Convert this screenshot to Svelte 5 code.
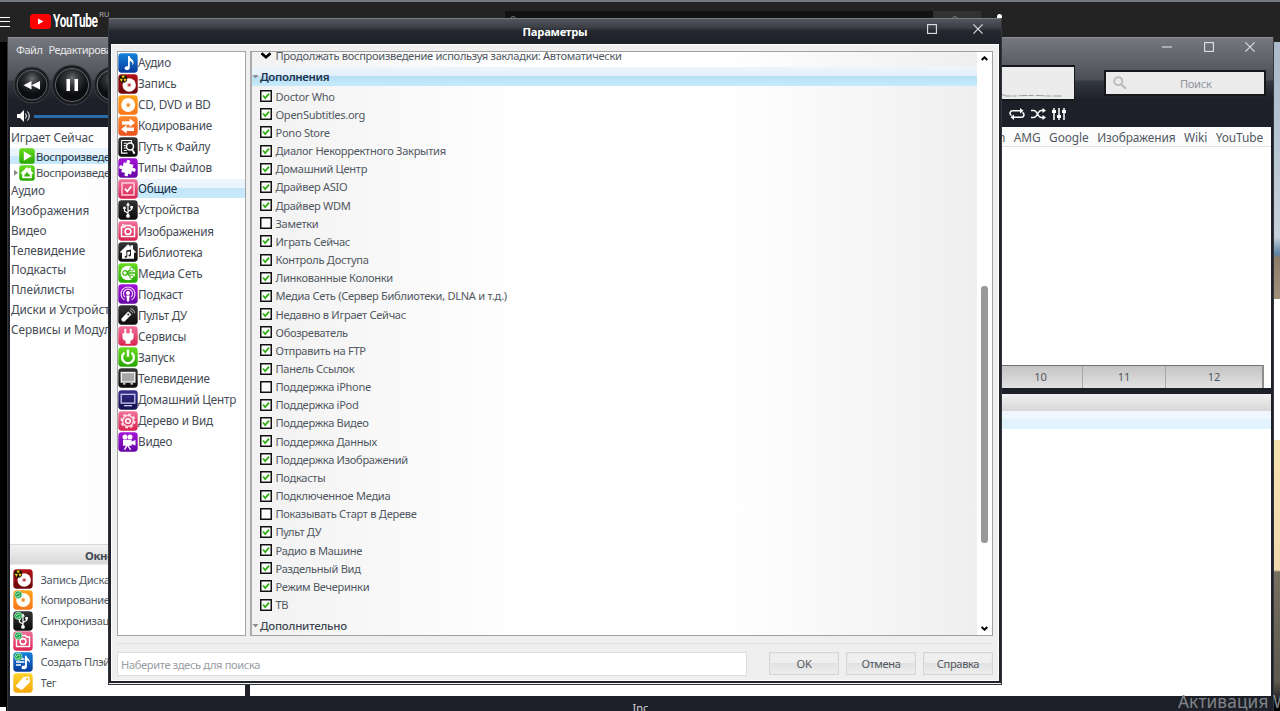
<script>
  const nav = [
    ['note', 'blue', 'Аудио'], ['burn', 'darkred', 'Запись'], ['disc', 'orange', 'CD, DVD и BD'],
    ['convert', 'flame', 'Кодирование'], ['path', 'black', 'Путь к Файлу'], ['puzzle', 'purple', 'Типы Файлов'],
    ['check', 'pink', 'Общие'], ['usb', 'black', 'Устройства'], ['camera', 'pink', 'Изображения'],
    ['house', 'black', 'Библиотека'], ['network', 'green', 'Медиа Сеть'], ['podcast', 'purple', 'Подкаст'],
    ['remote', 'black', 'Пульт ДУ'], ['plug', 'pink', 'Сервисы'], ['power', 'green', 'Запуск'],
    ['tv', 'black', 'Телевидение'], ['screen', 'navy', 'Домашний Центр'], ['gear', 'pink', 'Дерево и Вид'],
    ['video', 'purple', 'Видео']
  ];
  const off = ['Заметки', 'Поддержка iPhone', 'Показывать Старт в Дереве'];
  const options = ['Doctor Who', 'OpenSubtitles.org', 'Pono Store', 'Диалог Некорректного Закрытия', 'Домашний Центр',
    'Драйвер ASIO', 'Драйвер WDM', 'Заметки', 'Играть Сейчас', 'Контроль Доступа', 'Линкованные Колонки',
    'Медиа Сеть (Сервер Библиотеки, DLNA и т.д.)', 'Недавно в Играет Сейчас', 'Обозреватель', 'Отправить на FTP',
    'Панель Ссылок', 'Поддержка iPhone', 'Поддержка iPod', 'Поддержка Видео', 'Поддержка Данных',
    'Поддержка Изображений', 'Подкасты', 'Подключенное Медиа', 'Показывать Старт в Дереве', 'Пульт ДУ',
    'Радио в Машине', 'Раздельный Вид', 'Режим Вечеринки', 'ТВ'];
  const tree = ['Аудио', 'Изображения', 'Видео', 'Телевидение', 'Подкасты', 'Плейлисты', 'Диски и Устройства', 'Сервисы и Модули'];
  const actions = [
    ['burn', 'darkred', 'Запись Диска', false], ['disc', 'orange', 'Копирование Диска', true],
    ['usb', 'black', 'Синхронизация', true], ['camera', 'pink', 'Камера', true],
    ['playlist', 'blue', 'Создать Плэйлист', true], ['tag', 'yellow', 'Тег', false]
  ];
  const gradients = {
    blue: ['#1583dc', '#07399a'], darkred: ['#b51218', '#690507'], orange: ['#ffa51c', '#f8751a'],
    flame: ['#ff8a2e', '#ea511c'], black: ['#343434', '#0b0b0b'], purple: ['#a514d8', '#6406a5'],
    pink: ['#f0719a', '#d92350'], green: ['#68dc20', '#27a700'], navy: ['#39308c', '#14104d'], yellow: ['#ffd42b', '#f5a50c']
  };
  const links = ['Amazon', 'AMG', 'Google', 'Изображения', 'Wiki', 'YouTube'];
</script>

{#snippet icon(kind, color, badge)}
  <svg class="icon" viewBox="0 0 20 20">
    <rect x=".3" y=".3" width="19.4" height="19.4" rx="3.4" fill="url(#g-{color})" />
    <g fill="#fff" stroke="none">
      {#if kind === 'note'}
        <path d="M10 3h1.7c.2 2.6 3.9 3.4 3.9 6.5 0 1.2-.6 2.3-1.2 2.9.6-2.4-.5-3.7-2.6-4.3v6.4c0 1.6-1.3 2.6-2.8 2.6-1.4 0-2.4-.7-2.4-1.8 0-1.3 1.5-2.3 3.4-2z" />
      {:else if kind === 'burn'}
        <circle cx="11.2" cy="11" r="6.7" /><circle cx="11.2" cy="11" r="2.3" fill="#e9b4b4" /><circle cx="11.2" cy="11" r="1.1" fill="#b31a20" />
        <circle cx="5.2" cy="4.8" r="4" fill="#1a1400" />
        <path fill="#f4c81c" d="M5.2 4.8 3.4 1.6h3.6zM5.2 4.8H1.7l1.7 3.2zM5.2 4.8h3.5L7 8z" />
        <circle cx="5.2" cy="4.8" r=".9" fill="#1a1400" />
      {:else if kind === 'disc'}
        <circle cx="10.2" cy="10" r="7" /><circle cx="10.2" cy="10" r="2.5" fill="#ffd3a6" /><circle cx="10.2" cy="10" r="1.2" fill="#ef7d1a" />
      {:else if kind === 'convert'}
        <path d="M4 5.300h7.600V2.500l5.400 4.300-5.400 4.100V8.700H4zM16 11.400H8.600V9l-5.600 4.200 5.600 4.300v-2.600H16z" />
      {:else if kind === 'path'}
        <path d="M3.500 3.500h10v3M3.500 3.500v12.600h6M5.800 6.200h3M5.800 8.600h2M5.800 11h2M5.800 13.500h3" fill="none" stroke="#fff" stroke-width="1.1" />
        <circle cx="12" cy="9.600" r="3.500" fill="none" stroke="#fff" stroke-width="1.500" /><path d="m13.400 12.500 1.400-.8 2.600 4.600-1.800 1z" />
      {:else if kind === 'puzzle'}
        <g transform="rotate(14 10 10)"><path d="M4.500 5.500h3C6.200 3.400 7.300 2 8.800 2s2.600 1.400 1.300 3.500h4.400v3.700c2.100-1.300 3.500-.2 3.500 1.300s-1.400 2.600-3.500 1.300v3.700h-3.300c1.300 2.100.2 3-1.300 3s-2.600-.9-1.300-3H4.500v-3.300c-2.100 1.300-3.300.2-3.300-1.300s1.200-2.600 3.300-1.300z" /></g>
      {:else if kind === 'check'}
        <rect x="4" y="4" width="12" height="12" fill="none" stroke="#ffd6e1" stroke-width="1.400" /><path d="m6.800 9.700 2.500 2.700 4-5" fill="none" stroke="#fff" stroke-width="1.700" />
      {:else if kind === 'usb'}
        <path d="M10 5v10M10 13.200 6.500 11V8M10 11.500l3.600-2V7.500" fill="none" stroke="#fff" stroke-width="1.200" />
        <path d="m10 2.300 2 3.200H8z" /><circle cx="10" cy="15.900" r="1.900" /><circle cx="6.500" cy="8" r="1.400" /><path d="M12.300 6h2.600v2.500h-2.600z" />
      {:else if kind === 'camera'}
        <path d="M3.500 6h3l1-1.500h5l1 1.500h3v9.500h-13z" fill="none" stroke="#fff" stroke-width="1.500" /><circle cx="10" cy="10.500" r="2.900" fill="none" stroke="#fff" stroke-width="1.600" /><path d="M4 3.300h2.500v1.500H4z" />
      {:else if kind === 'house'}
        <path d="m10 2.200 2.700 2.500V3.200h2.300v3.700l3 3-1 1-1-.7v6.600H4v-6.600l-1 .7-1-1z" />
        <path d="M8.300 8.500 13 7.600v5.200c0 2.500-3 2-2.400.4.300-.8 1-.9 1.400-.9V9.500l-2.700.6v4c0 2.400-3 2.100-2.500.4.200-.7.900-.9 1.500-.8z" fill="#222" />
      {:else if kind === 'homeplay'}
        <path d="m10 2.500 2.700 2.500V3.500h2.300v3.700l3 3-1 1-1-.7v6H4v-6l-1 .7-1-1z" /><path d="M8.500 9.500h3v2h2v3H6.800v-3h1.700z" fill="#38b60b" />
      {:else if kind === 'play'}
        <path d="M6 4.200v11.600L16 10z" />
      {:else if kind === 'network'}
        <circle cx="10" cy="10" r="7.300" /><path d="M7.500 9.900 14 6.300M7.500 9.900l6.500 4M7.500 9.900H18" fill="none" stroke="#38b60b" stroke-width="1.500" /><circle cx="7" cy="9.900" r="2.200" stroke="#38b60b" stroke-width="1.200" /><circle cx="13.700" cy="6.200" r="1.800" stroke="#38b60b" /><circle cx="13.700" cy="13.800" r="1.800" stroke="#38b60b" />
      {:else if kind === 'podcast'}
        <g fill="none" stroke="#eedcff" stroke-width="1.100"><path d="M6.500 16A7 7 0 1 1 13.500 16" /><path d="M7 13.200A4.600 4.600 0 1 1 13 13.200" /></g><circle cx="10" cy="9" r="2" /><path d="M8.300 11.400h3.400l-.7 6H9z" />
      {:else if kind === 'remote'}
        <path d="m10.200 6.500 3.200 3.100-6.500 6.700c-1.900 1.400-4.400-.9-3.200-3z" /><circle cx="10.300" cy="9.600" r="1" fill="#222" />
        <path d="M12 5.800c1.300-.2 2.500.8 2.400 2.400M12.200 3.800c2.600-.2 4.500 1.700 4.200 4.400" fill="none" stroke="#ccc" stroke-width=".9" />
      {:else if kind === 'plug'}
        <path d="M6.300 2.700h1.900v4.600h3.600V2.700h1.900v4.600h1.800v4.300c0 1.800-1.400 3-3.100 3.200v3H7.600v-3c-1.700-.2-3.100-1.400-3.100-3.200V7.300h1.800z" />
      {:else if kind === 'power'}
        <path d="M6.500 5.600a5.900 5.900 0 1 0 7 0M10 2.800v7" fill="none" stroke="#fff" stroke-width="2.300" />
      {:else if kind === 'tv'}
        <rect x="3.300" y="4.500" width="13.500" height="9.500" fill="#a7a7a7" stroke="#f2f2f2" stroke-width="1.400" /><path d="M5 15.300h2.500v1.300H5zM12.500 15.300H15v1.300h-2.500z" />
      {:else if kind === 'screen'}
        <rect x="3.200" y="4.300" width="13.600" height="8.800" fill="none" stroke="#c6c9f4" stroke-width="1.300" /><path d="M6 15h8v1.300H6z" fill="#c6c9f4" />
      {:else if kind === 'gear'}
        <circle cx="10" cy="10" r="6.800" fill="none" stroke="#ffe3ea" stroke-width="1.500" stroke-dasharray="3 2.340" /><circle cx="10" cy="10" r="5.400" fill="none" stroke="#ffe3ea" stroke-width="1.500" /><circle cx="10" cy="10" r="2.300" fill="none" stroke="#fff" stroke-width="1.500" />
      {:else if kind === 'video'}
        <circle cx="7" cy="5" r="2.500" /><circle cx="12" cy="5" r="2.500" /><path d="M5 7.800h8.700v1.700L17.500 8v5.500l-3.800-1.500v1.700h-3l2.700 4h-1.700L9.500 14l-2.200 3.700H5.700l2.300-4H5z" />
      {:else if kind === 'playlist'}
        <path d="M3 6.200h8.500v1.600H3zM3 9.200h8.500v1.600H3zM3 12.200h5v1.600H3zM12 3.700h1.500c.3 2.600 4 3.200 3.400 7.500-.7-1.600-1.600-2.200-3-2.600v6.100c-.3 3.200-5.400 3.300-5.400 1 0-1.500 1.700-2.400 3.500-2z" />
      {:else if kind === 'tag'}
        <path d="M3.200 12.300 10.600 4l5.500-.6.900 5.500-7.500 7.600c-.6.600-1.100.6-1.700 0L3.200 13.700c-.4-.5-.4-.9 0-1.400z" /><circle cx="14.200" cy="6.100" r="1.100" fill="#f7b51a" />
      {/if}
      {#if badge}
        <circle cx="5.300" cy="4.800" r="3.700" fill="#1fa04d" stroke="#b8f1ca" stroke-width=".8" /><path d="M3.500 5a2 2 0 0 1 3.300-1.500M7 4.800a2 2 0 0 1-3.300 1.500" fill="none" stroke="#d9ffe5" stroke-width=".8" />
      {/if}
    </g>
  </svg>
{/snippet}

<svg class="defs" width="0" height="0">
  <defs>
    {#each Object.entries(gradients) as [id, [a, b]]}
      <linearGradient id="g-{id}" x2="0" y2="1"><stop stop-color={a} /><stop offset="1" stop-color={b} /></linearGradient>
    {/each}
    <radialGradient id="g-knob" cy=".3"><stop stop-color="#6a6c71" /><stop offset=".45" stop-color="#303135" /><stop offset="1" stop-color="#0c0d10" /></radialGradient>
  </defs>
</svg>

<div class="desktop">
  <header class="youtube">
    <div class="burger"></div>
    <svg class="ytmark" viewBox="0 0 21 15"><rect width="21" height="15" rx="3.500" fill="#f00" /><path d="M8 4.400v6.200l5.500-3.100z" fill="#fff" /></svg>
    <span class="ytname">YouTube</span><sup>RU</sup>
    <div class="ytsearch"><i></i></div><div class="ytbtn"><i></i></div><div class="ytmic"></div>
  </header>
  <div class="wallpaper"></div>
  <div class="corner"></div>

  <section class="player">
    <div class="chrome">
      <div class="controls">
        <div class="menu"><span>Файл</span><span>Редактировать</span></div>
        <div class="knobs">
          <svg width="38" height="40" viewBox="0 0 38 40"><circle cx="19" cy="20" r="18" fill="#1b1c20" stroke="#3f4146" /><circle cx="19" cy="20" r="15" fill="url(#g-knob)" stroke="#74767b" stroke-width=".8" /><path d="M18.500 16v8.500l-8-4.300zM27 16v8.500l-8.500-4.300z" fill="#fff" /></svg>
          <svg width="42" height="44" viewBox="0 0 42 44"><circle cx="21" cy="22" r="20" fill="#1b1c20" stroke="#3f4146" /><circle cx="21" cy="22" r="16.500" fill="url(#g-knob)" stroke="#777" stroke-width=".8" /><path d="M15.500 16h3.500v12h-3.500zM23.500 16h3.500v12h-3.500z" fill="#fff" /></svg>
          <svg width="38" height="40" viewBox="0 0 38 40"><circle cx="19" cy="20" r="18" fill="#1b1c20" stroke="#3f4146" /><circle cx="19" cy="20" r="15" fill="url(#g-knob)" stroke="#74767b" /></svg>
        </div>
        <div class="volume">
          <svg width="14" height="12" viewBox="0 0 14 12"><path d="M0 4h3l4-4v12L3 8H0z" fill="#fff" /><path d="M8.500 3.500q2 2.500 0 5M10.500 1.500q3.500 4.500 0 9" fill="none" stroke="#fff" /></svg>
          <div class="track"></div>
        </div>
      </div>
      <div class="tools">
        <div class="winbtns">
          <svg width="10" height="10" viewBox="0 0 10 10"><path d="M0 5h10" /></svg>
          <svg width="10" height="10" viewBox="0 0 10 10"><rect x=".6" y=".6" width="8.800" height="8.800" /></svg>
          <svg width="10" height="10" viewBox="0 0 10 10"><path d="m.4.400 9.200 9.200M9.600.400.400 9.600" /></svg>
        </div>
        <div class="boxes">
          <div class="display"><svg width="72" height="6" viewBox="0 0 72 6"><path d="M0 3.500l4 1.500h10l8-.5h14l10 .5h14" stroke="#9b9da5" stroke-width="1" stroke-dasharray="9 1 5 2" fill="none" /></svg></div>
          <div class="find"><svg width="14" height="14" viewBox="0 0 14 14"><circle cx="5.300" cy="5.200" r="4" fill="none" stroke="#bcbcbc" stroke-width="2" /><path d="m8.300 8.300 4.500 4.500" stroke="#bcbcbc" stroke-width="2.300" /></svg><span>Поиск</span></div>
        </div>
        <div class="modes">
          <svg width="16" height="12" viewBox="0 0 16 12"><path d="M2.500 7.500C0 6 1 2.700 3.500 2.700H12M13.500 4.500C16 6 15 9.300 12.500 9.300H4" /><path class="solid" d="M11 0l3.500 2.700L11 5.400zM5 6.600 1.500 9.300 5 12z" /></svg>
          <svg width="15" height="12" viewBox="0 0 15 12"><path d="M0 2.500h3c3 0 4 7 7 7h2M0 9.500h3c3 0 4-7 7-7h2" /><path class="solid" d="M11.500 0 15 2.500l-3.500 2.600zM11.500 6.900 15 9.500 11.500 12z" /></svg>
          <svg width="14" height="12" viewBox="0 0 14 12"><path d="M2 0v12M7 0v12M12 0v12" /><path class="solid" d="M0 2h4v3H0zM5 7h4v3H5zM10 2h4v3h-4z" /></svg>
        </div>
      </div>
    </div>
    <div class="work">
      <aside>
        <div class="tree">
          <div class="trow">Играет Сейчас</div>
          <div class="sub active"><b></b>{@render icon('play', 'green')}<span>Воспроизведение</span></div>
          <div class="sub"><b><i class="arrow"></i></b>{@render icon('homeplay', 'green')}<span>Воспроизведение</span></div>
          {#each tree as t}<div class="trow">{t}</div>{/each}
        </div>
        <div class="acthead">Окно Действий</div>
        <div class="actions">
          {#each actions as [k, c, t, b]}<div class="act">{@render icon(k, c, b)}<span>{t}</span></div>{/each}
        </div>
      </aside>
      <main>
        <div class="upper">
          <div class="links">{#each links as l}<span>{l}</span>{/each}</div>
          <div class="cols"><span>10</span><span>11</span><span>12</span></div>
        </div>
        <div class="lower"><div class="lhead"></div><div class="lsel"></div></div>
      </main>
    </div>
    <footer>Inc</footer>
  </section>

  <section class="dialog">
    <div class="title"><span>Параметры</span>
      <div class="dbtns">
        <svg width="10" height="10" viewBox="0 0 10 10"><rect x=".6" y=".6" width="8.800" height="8.800" /></svg>
        <svg width="10" height="10" viewBox="0 0 10 10"><path d="m.4.400 9.200 9.200M9.600.400.400 9.600" /></svg>
      </div>
    </div>
    <div class="body">
      <div class="panes">
        <nav>
          {#each nav as [k, c, t]}<div class={['nrow', k === 'check' && 'sel']}>{@render icon(k, c)}<span>{t}</span></div>{/each}
        </nav>
        <div class="settings">
          <div class="content">
            <div class="opt first"><svg width="12" height="8" viewBox="0 0 12 8"><path d="m1.500 1.300 4.500 4 4.500-4" fill="none" stroke="#000" stroke-width="2.600" /></svg><span>Продолжать воспроизведение используя закладки: Автоматически</span></div>
            <div class="group on"><i></i>Дополнения</div>
            <div class="opts">
              {#each options as o}
                <div class="opt">
                  <svg width="12" height="12" viewBox="0 0 12 12"><rect x=".75" y=".75" width="10.500" height="10.500" fill="#fff" stroke="#111" stroke-width="1.500" />{#if !off.includes(o)}<path d="m3 5.500 2.200 2.600L9 3.600" fill="none" stroke="#2fae12" stroke-width="1.700" />{/if}</svg>
                  <span>{o}</span>
                </div>
              {/each}
            </div>
            <div class="group"><i></i>Дополнительно</div>
          </div>
          <div class="scroll">
            <svg width="7" height="5" viewBox="0 0 7 5"><path d="M.7 4 3.500 1.300 6.300 4" /></svg>
            <div class="thumb"></div>
            <svg width="7" height="5" viewBox="0 0 7 5"><path d="M.7 1 3.500 3.700 6.300 1" /></svg>
          </div>
        </div>
      </div>
      <div class="bottom">
        <div class="query">Наберите здесь для поиска</div>
        <div class="buttons"><button>OK</button><button>Отмена</button><button>Справка</button></div>
      </div>
    </div>
  </section>
  <div class="watermark">Активация Windows</div>
</div>

<style>
  :global(body) { overflow: hidden; }
  * { box-sizing: border-box; }
  .desktop { position: relative; width: 1280px; height: 711px; overflow: hidden; background: #000; font-family: "Noto Sans", sans-serif; font-size: 11.1px; color: #515862; white-space: nowrap; }
  .defs { position: absolute; }
  .icon { flex: none; width: 20px; height: 20px; display: block; }
  .youtube { display: flex; height: 42px; background: #232323; border-top: 2px solid #73797e; position: relative; }
  .burger { width: 10px; height: 10px; margin-top: 15px; border-top: 1.500px solid #fff; border-bottom: 1px solid #fff; background: linear-gradient(#fff, #fff) 0 3px / 10px 1px no-repeat; }
  .ytmark { width: 21px; height: 15px; margin: 12px 0 0 20px; }
  .ytname { width: 44px; margin: 8px 0 0 2px; font: 700 18.500px/23px Roboto, sans-serif; letter-spacing: -.5px; color: #fff; transform: scaleX(.64); transform-origin: 0 0; }
  sup { font: 8px/10px Roboto, sans-serif; margin: 8px 0 0 2px; color: #aaa; }
  .ytsearch, .ytbtn { position: absolute; top: 9px; height: 30px; background: #121212; left: 505px; width: 428px; }
  .ytbtn { left: 933px; width: 48px; background: #323232; }
  .ytsearch i, .ytbtn i { display: block; width: 6px; height: 6px; margin: 5px 0 0 5px; border: 1px solid #777; border-radius: 50%; }
  .ytbtn i { margin-left: 19px; }
  .ytmic { position: absolute; left: 997px; top: 12px; width: 5px; height: 8px; border-radius: 3px; background: #fff; }
  .wallpaper { position: absolute; left: 1274px; top: 42px; width: 6px; height: 658px; background: linear-gradient(#a9bacb 0, #c5d0da 195px, #5c83a5 212px, #8d7d68 216px, #a28f79 257px, #fff 257px, #fff 398px, #f5e3ae 398px, #eed9ad 528px, #77705f 530px, #5e594e 640px, #222 658px); }
  .corner { position: absolute; left: 0; top: 707px; width: 6px; height: 4px; background: #fff; }

  .player { position: absolute; left: 7px; top: 37px; width: 1267px; height: 674px; background: #1d2028; display: flex; flex-direction: column; border-left: 1px solid #34373e; border-right: 1px solid #34373e; }
  .chrome { height: 90px; flex: none; display: flex; justify-content: space-between; border-top: 1px solid #8b8e93; background: linear-gradient(#75787e, #4b4e55 42px, #343840 43px, #1d2028 62px); }
  .controls { width: 240px; }
  .menu { display: flex; gap: 6px; padding: 4px 0 0 8px; height: 25px; line-height: 16px; color: #e6e7e9; font-size: 11px; letter-spacing: -.5px; }
  .knobs { display: flex; align-items: center; padding-left: 5px; height: 44px; gap: 0; }
  .volume { display: flex; align-items: center; gap: 3px; padding-left: 9px; margin-top: 3px; height: 12px; }
  .track { flex: 1; height: 3px; background: #286cab; }
  .tools { width: 271px; display: flex; flex-direction: column; }
  .winbtns { display: flex; gap: 31.500px; justify-content: flex-end; padding: 4px 18px 0 0; height: 27px; }
  .winbtns svg, .dbtns svg { fill: none; stroke: #e1e2e4; stroke-width: 1.100; }
  .boxes { display: flex; justify-content: space-between; height: 36px; padding-right: 7px; }
  .display { width: 73px; height: 36px; border: 2px solid #15171b; border-left: 0; border-right-width: 1px; background: #ececec; display: flex; align-items: flex-end; padding-bottom: 2px; }
  .find { width: 162px; height: 26px; margin-top: 5px; border: 2px solid #16181c; background: #ebebeb; display: flex; align-items: center; padding-left: 7px; color: #8f949b; letter-spacing: -.3px; }
  .find span { margin-left: 53px; }
  .modes { display: flex; gap: 6px; padding: 7px 0 0 7px; }
  .modes svg { fill: none; stroke: #fff; stroke-width: 1.500; }
  .modes .solid { fill: #fff; stroke: none; }
  .work { height: 569px; flex: none; display: flex; gap: 5px; padding: 0 2px; }
  aside { width: 235px; display: flex; flex-direction: column; background: #fff; }
  .tree { height: 417px; padding-top: 1px; background: linear-gradient(90deg, #fff 30%, #f0f0f0); font-size: 11.800px; letter-spacing: -.05px; color: #444b55; }
  .trow { height: 19.850px; line-height: 19px; padding-left: 1px; }
  .sub { display: flex; align-items: center; height: 16.600px; padding-left: 4px; font-size: 11.300px; letter-spacing: -.35px; }
  .sub .icon { width: 16px; height: 16px; margin-right: 1px; }
  .sub b { width: 5px; flex: none; }
  .arrow { display: block; width: 4px; height: 6px; background: #888; clip-path: polygon(0 0, 100% 50%, 0 100%); }
  .active { background: linear-gradient(#eaf4fd 50%, #c7e9fb 50%); color: #263445; }
  .acthead { height: 21px; flex: none; line-height: 22px; padding-left: 75px; font-weight: 700; font-size: 11.300px; letter-spacing: -.4px; background: linear-gradient(#f2f2f2, #d9d9d9 90%, #eee); border-top: 1px solid #d8d8d8; color: #414852; }
  .actions { padding-top: 4px; }
  .act { display: flex; gap: 7.500px; align-items: center; height: 20.650px; padding-left: 3px; letter-spacing: -.3px; }
  .act span { width: 70px; overflow: hidden; }
  main { flex: 1; display: flex; flex-direction: column; gap: 6px; }
  .upper { height: 261px; background: #fff; display: flex; flex-direction: column; justify-content: space-between; }
  .links { display: flex; justify-content: flex-end; gap: 8.500px; height: 20px; line-height: 21px; padding-right: 8px; border-bottom: 1px solid #e2e2e2; background: #fcfcfc; font-size: 11.900px; letter-spacing: -.1px; }
  .cols { align-self: flex-end; display: grid; grid-template-columns: 83px 83px 97px; height: 23px; margin-right: 7px; border-top: 1px solid #717375; border-right: 2px solid #8e8e8e; background: linear-gradient(#c4c4c4, #e2e2e2); text-align: center; line-height: 22px; }
  .cols span + span { border-left: 1px solid #a7a7a7; }
  .lower { flex: 1; background: #fff; }
  .lhead { height: 17px; background: linear-gradient(#f1f1f1, #d7d7d7); }
  .lsel { height: 18px; background: linear-gradient(#f0f6fd 45%, #e1f3fc 45%); }
  footer { padding: 4px 0 0 0; color: #d3d5d8; text-align: center; line-height: 15px; font-size: 11px; }

  .dialog { position: absolute; left: 108px; top: 18px; width: 894px; height: 667px; background: #202329; border: solid #33363b; border-width: 0 1px 1px; padding: 0 2px 2px; box-shadow: inset 0 -1px #f4f4f4; }
  .title { height: 26px; margin: 0 -2px; border-top: 1px solid #777a80; background: linear-gradient(#54575d, #393c43 9px, #24272e 12px, #1d2028); display: flex; align-items: center; justify-content: center; color: #fff; font-size: 11.200px; font-weight: 700; letter-spacing: -.25px; position: relative; }
  .title span { line-height: 24px; margin-top: 1px; }
  .dbtns { position: absolute; right: 18px; top: 5px; display: flex; gap: 36px; }
  .body { height: 637px; background: #efefef; border: 1px solid #fff; padding: 6px 5px 0; }
  .panes { display: flex; gap: 5px; height: 585px; }
  nav { width: 129px; border: 1px solid #a5a5a5; background: #fff; color: #444b55; font-size: 11.700px; letter-spacing: -.2px; }
  .nrow { height: 21.070px; display: flex; align-items: center; }
  .nrow span { line-height: 19px; }
  .sel { background: linear-gradient(transparent 1px, #eef5fd 1px, #e8f3fd 10px, #c1e5f8 10px, #c8ebfb 20px, transparent 20px); color: #152c44; }
  .settings { width: 743px; border: 1px solid #a0a0a0; border-left: 2px solid #aaa; margin-left: -1px; padding-right: 0; display: flex; overflow: hidden; flex: 1; }
  .content { flex: 1; background: linear-gradient(90deg, #f2f2f2, #fff 38%, #fff 65%, #efefef); }
  .opt { display: flex; gap: 3.500px; align-items: center; height: 18.170px; padding-left: 8px; line-height: 18px; letter-spacing: -.3px; }
  .opt svg { flex: none; margin-top: -1px; }
  .first { height: 14px; align-items: flex-end; line-height: 18px; }
  .first span { margin-bottom: 1px; }
  .first svg { margin-bottom: 6px; }
  .group { display: flex; align-items: center; height: 20px; font-size: 11.500px; font-weight: 500; letter-spacing: -.25px; color: #3e4650; }
  .group i { width: 7px; height: 4px; background: #8b8e94; clip-path: polygon(0 0, 100% 0, 50% 100%); margin-right: 1px; }
  .on { height: 21px; font-weight: 600; letter-spacing: -.35px; color: #1e3550; background: linear-gradient(transparent 1px, #edf5fd 1px, #e4effa 10px, #b9dff5 10px, #c6ebfb 20px, transparent 20px); }
  .opts { padding-top: .6px; height: 528.500px; }
  .scroll { width: 15px; background: #fff; display: flex; flex-direction: column; align-items: center; padding: 4px 0; }
  .scroll svg { fill: none; stroke: #000; stroke-width: 2; flex: none; }
  .thumb { width: 7px; height: 257px; margin: 225px 0 82.500px; border-radius: 3px; background: #999; flex: none; }
  .bottom { height: 39px; margin-top: 7px; border-top: 1px solid #e2e2e2; display: flex; justify-content: space-between; padding-top: 8px; letter-spacing: -.35px; }
  .query { width: 630px; height: 24px; border: 1px solid #dcdcdc; background: #fff; padding-left: 3px; line-height: 23px; color: #989da4; }
  .buttons { display: flex; gap: 7px; }
  button { width: 70px; height: 23px; padding: 0; border: 1px solid #d5d5d5; box-shadow: inset 0 0 0 1px #e9e9e9; background: linear-gradient(#efefef 45%, #e1e1e1 50%, #eee); font: inherit; letter-spacing: inherit; color: #515862; flex: none; }
  .watermark { position: absolute; left: 1178px; top: 690px; font-size: 17.200px; line-height: 24px; letter-spacing: .15px; color: #81858a; }
</style>
